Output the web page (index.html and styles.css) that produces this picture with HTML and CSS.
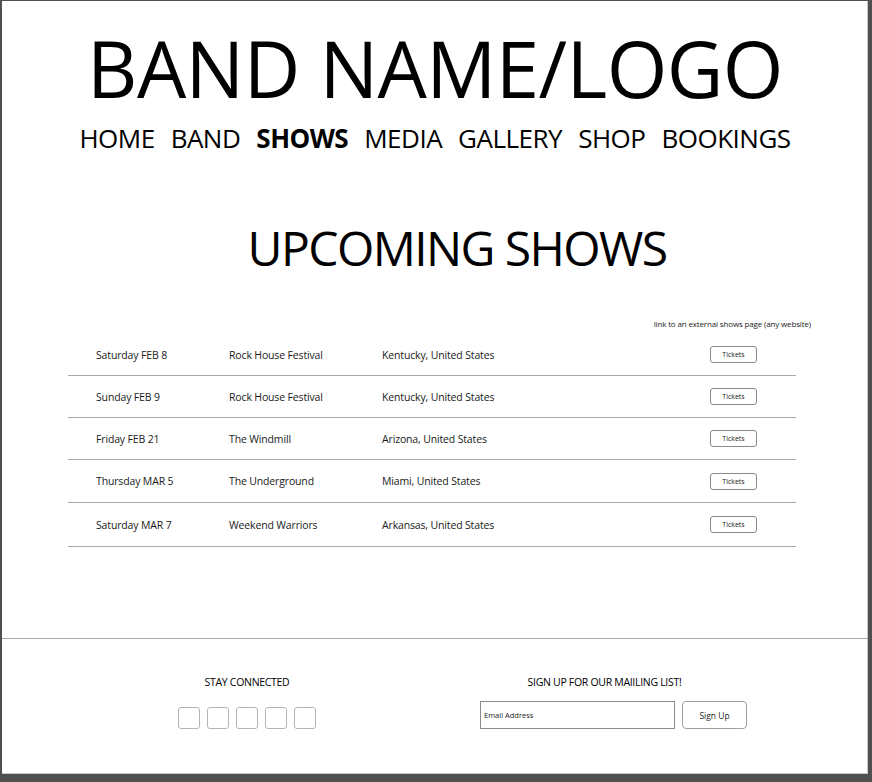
FILE: index.html
```html
<!DOCTYPE html>
<html lang="en">
<head>
    <meta charset="UTF-8">
    <meta name="viewport" content="width=device-width, initial-scale=1.0">
    <title>Band Name - Shows</title>
    <link rel="stylesheet" href="styles.css">
</head>
<body>
    <div class="frame">
        <div class="main">
            <h1 class="logo">BAND NAME/LOGO</h1>
            <nav class="nav">
                <a href="#">HOME</a>
                <a href="#">BAND</a>
                <a href="#" class="active">SHOWS</a>
                <a href="#">MEDIA</a>
                <a href="#">GALLERY</a>
                <a href="#">SHOP</a>
                <a href="#">BOOKINGS</a>
            </nav>
            <h2 class="page-title">UPCOMING SHOWS</h2>
            <p class="note">link to an external shows page (any website)</p>
            <div class="shows">
                <div class="show">
                    <span>Saturday FEB 8</span>
                    <span>Rock House Festival</span>
                    <span>Kentucky, United States</span>
                    <button class="tickets">Tickets</button>
                </div>
                <div class="show">
                    <span>Sunday FEB 9</span>
                    <span>Rock House Festival</span>
                    <span>Kentucky, United States</span>
                    <button class="tickets">Tickets</button>
                </div>
                <div class="show">
                    <span>Friday FEB 21</span>
                    <span>The Windmill</span>
                    <span>Arizona, United States</span>
                    <button class="tickets">Tickets</button>
                </div>
                <div class="show">
                    <span>Thursday MAR 5</span>
                    <span>The Underground</span>
                    <span>Miami, United States</span>
                    <button class="tickets">Tickets</button>
                </div>
                <div class="show">
                    <span>Saturday MAR 7</span>
                    <span>Weekend Warriors</span>
                    <span>Arkansas, United States</span>
                    <button class="tickets">Tickets</button>
                </div>
            </div>
        </div>
        <footer class="footer">
            <div class="connect">
                <h3>STAY CONNECTED</h3>
                <div class="socials">
                    <a href="#" class="social"></a>
                    <a href="#" class="social"></a>
                    <a href="#" class="social"></a>
                    <a href="#" class="social"></a>
                    <a href="#" class="social"></a>
                </div>
            </div>
            <div class="signup">
                <h3>SIGN UP FOR OUR MAIILING LIST!</h3>
                <form class="signup-form">
                    <input type="text" placeholder="Email Address">
                    <button type="button">Sign Up</button>
                </form>
            </div>
        </footer>
    </div>
</body>
</html>
```
FILE: styles.css
```css
* { box-sizing: border-box; }
body { margin: 0; font-family: "Open Sans", "Noto Sans", sans-serif; color: #000; background: #fff; }

.frame { height: 782px; display: flex; flex-direction: column; border-style: solid; border-color: #505050; border-width: 1px 4px 8px 2px; box-shadow: inset -1px -1px 0 #c8c8c8; }
.main { flex: 1; }

.logo { margin: 28px 0 0; font-size: 78px; font-weight: 400; line-height: 1; text-align: center; letter-spacing: -0.6px; }

.nav { display: flex; justify-content: center; gap: 16px; margin-top: 18px; font-size: 26px; line-height: 1; letter-spacing: -0.5px; }
.nav a { color: #000; text-decoration: none; }
.nav a.active { font-weight: 700; }

.page-title { margin: 73px 0 0 44px; font-size: 48px; font-weight: 400; line-height: 1; text-align: center; letter-spacing: -1.6px; }

.note { margin: 47px 57px 0 0; font-size: 8px; line-height: 10px; text-align: right; color: #222; letter-spacing: -0.15px; }

.shows { margin: 5px 0 0 66px; width: 728px; }
.show { display: grid; grid-template-columns: 133px 153px 1fr 47px; align-items: center; height: 42px; padding: 0 39px 0 28px; border-bottom: 1px solid #a8a8a8; font-size: 10.5px; letter-spacing: -0.15px; color: #1a1a1a; }
.show:nth-child(4) { height: 43px; }
.show:nth-child(5) { height: 44px; }
.tickets { height: 17px; padding: 0; border: 1px solid #8a8a8a; border-radius: 3px; background: #fff; font-family: inherit; font-size: 7px; color: #222; }

.footer { height: 136px; display: grid; grid-template-columns: 164px 267px; column-gap: 151px; padding: 36px 0 0 163px; border-top: 1px solid #a8a8a8; }
.footer h3 { margin: 0; font-size: 10.5px; font-weight: 400; line-height: 14px; text-align: center; letter-spacing: -0.3px; }
.signup h3 { margin-right: 18px; }
.socials { display: flex; justify-content: center; gap: 7px; margin-top: 18px; }
.social { width: 22px; height: 22px; border: 1px solid #b4b4b4; border-radius: 3px; }
.signup-form { display: flex; gap: 7px; margin-top: 12px; }
.signup-form input { width: 195px; height: 28px; padding: 0 3px; border: 1px solid #8c8c8c; font-family: inherit; font-size: 7.5px; }
.signup-form input::placeholder { color: #222; }
.signup-form button { width: 65px; height: 28px; padding: 0; border: 1px solid #a0a0a0; border-radius: 4px; background: #fff; font-family: inherit; font-size: 8.5px; color: #222; }
```
